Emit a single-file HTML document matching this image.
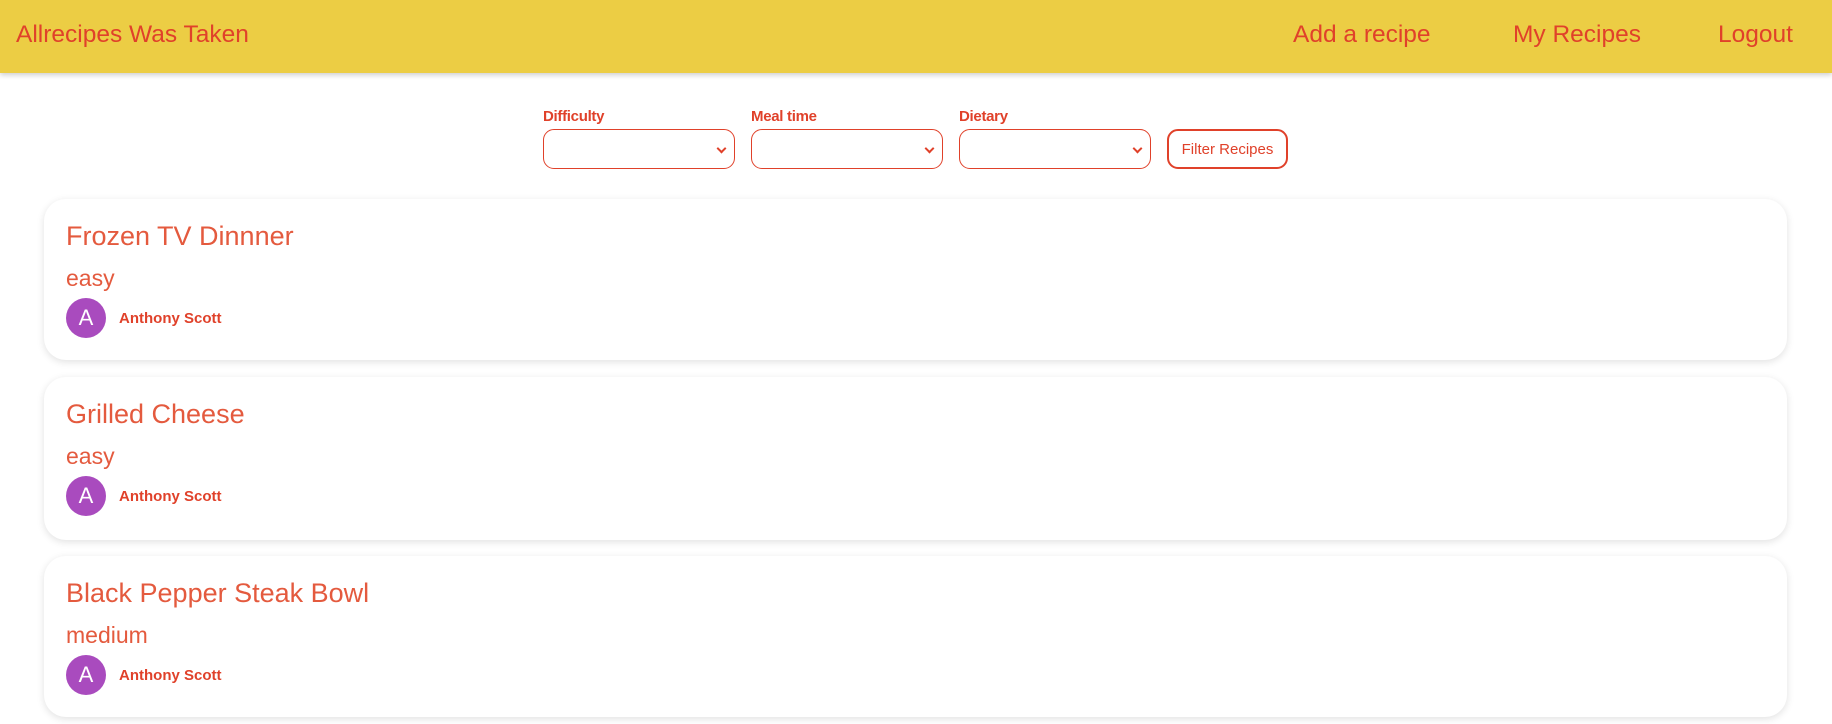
<!DOCTYPE html>
<html><head><style>
*{box-sizing:border-box;margin:0;padding:0}
body{width:1832px;height:724px;background:#fff;font-family:"Liberation Sans",sans-serif;color:#e0412a;overflow:hidden;position:relative}
.nav{position:absolute;left:0;top:0;width:1832px;height:73px;background:#eccd44;box-shadow:0 2px 5px rgba(0,0,0,.2)}
.nav span{position:absolute;top:21px;font-size:24.5px;color:#e0412a;white-space:nowrap}
.lbl{position:absolute;top:108px;font-size:15px;font-weight:bold;letter-spacing:-0.3px}
.sel{position:absolute;top:129px;width:192px;height:40px;border:1px solid #e0412a;border-radius:11px}
.sel:after{content:"";position:absolute;right:9px;top:15px;width:5px;height:5px;border-right:2px solid #e0412a;border-bottom:2px solid #e0412a;transform:rotate(45deg)}
.btn{position:absolute;left:1167px;top:129px;width:121px;height:40px;border:2px solid #e0412a;border-radius:11px;font-size:15px;text-align:center;line-height:38px}
.card{position:absolute;left:44px;width:1743px;border-radius:22px;background:#fff;box-shadow:0 2px 8px rgba(0,0,0,.12)}
.card .t{position:absolute;left:22px;top:22px;font-size:27px;color:#e45a3e}
.card .d{position:absolute;left:22px;top:66px;font-size:23px;color:#e45a3e}
.card .av{position:absolute;left:22px;top:99px;width:40px;height:40px;border-radius:50%;background:#a94bbe;color:#fff;font-size:22px;text-align:center;line-height:40px}
.card .n{position:absolute;left:75px;top:111px;font-size:15px;font-weight:bold}
</style></head><body>
<div class="nav">
<span style="left:16px">Allrecipes Was Taken</span>
<span style="left:1293px">Add a recipe</span>
<span style="left:1513px">My Recipes</span>
<span style="left:1718px">Logout</span>
</div>
<div class="lbl" style="left:543px">Difficulty</div>
<div class="lbl" style="left:751px">Meal time</div>
<div class="lbl" style="left:959px">Dietary</div>
<div class="sel" style="left:543px"></div>
<div class="sel" style="left:751px"></div>
<div class="sel" style="left:959px"></div>
<div class="btn">Filter Recipes</div>
<div class="card" style="top:199px;height:161px"><div class="t">Frozen TV Dinnner</div><div class="d">easy</div><div class="av">A</div><div class="n">Anthony Scott</div></div>
<div class="card" style="top:377px;height:163px"><div class="t">Grilled Cheese</div><div class="d">easy</div><div class="av">A</div><div class="n">Anthony Scott</div></div>
<div class="card" style="top:556px;height:161px"><div class="t">Black Pepper Steak Bowl</div><div class="d">medium</div><div class="av">A</div><div class="n">Anthony Scott</div></div>
</body></html>
